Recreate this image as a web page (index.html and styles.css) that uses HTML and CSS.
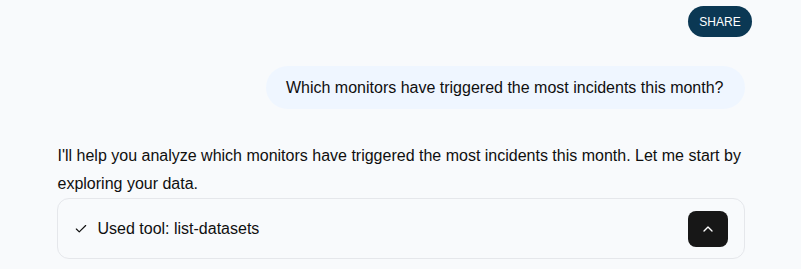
FILE: index.html
```html
<!DOCTYPE html>
<html lang="en">
<head>
<meta charset="utf-8">
<title>Chat</title>
<link rel="stylesheet" href="styles.css">
</head>
<body>
<header class="topbar">
  <button class="share">SHARE</button>
</header>
<main class="thread">
  <div class="user-msg">Which monitors have triggered the most incidents this month?</div>
  <p class="assistant-msg">I'll help you analyze which monitors have triggered the most incidents this month. Let me start by exploring your data.</p>
  <div class="tool-card">
    <div class="tool-label">
      <svg class="check" width="14" height="14" viewBox="0 0 24 24" fill="none" stroke="currentColor" stroke-width="2" stroke-linecap="round" stroke-linejoin="round"><path d="M20 6 9 17l-5-5"/></svg>
      <span>Used tool: list-datasets</span>
    </div>
    <button class="toggle" aria-label="Collapse">
      <svg width="16" height="16" viewBox="0 0 24 24" fill="none" stroke="#fff" stroke-width="2" stroke-linecap="round" stroke-linejoin="round"><path d="m18 15-6-6-6 6"/></svg>
    </button>
  </div>
</main>
</body>
</html>
```

FILE: styles.css
```css
* { box-sizing: border-box; }
html, body { margin: 0; padding: 0; }
body {
  background: #f8fafc;
  font-family: "Liberation Sans", Arial, sans-serif;
  color: #0f0f0f;
  font-size: 16px;
}
.topbar {
  display: flex;
  justify-content: flex-end;
  padding: 6px 49px 0 0;
}
.share {
  height: 31px;
  width: 64px;
  border: none;
  border-radius: 16px;
  background: #0b3854;
  color: #ffffff;
  font-family: "Liberation Sans", Arial, sans-serif;
  font-weight: normal;
  font-size: 12px;
  padding: 0;
}
.thread {
  width: 688px;
  margin: 0 auto;
  display: flex;
  flex-direction: column;
}
.user-msg {
  align-self: flex-end;
  margin-top: 29px;
  background: #eff6ff;
  border-radius: 22px;
  padding: 10px 21px 9px 20px;
  line-height: 24px;
}
.assistant-msg {
  margin: 33px 0 0 1px;
  line-height: 28px;
}
.tool-card {
  margin-top: 0;
  border: 1px solid #e5e7eb;
  border-radius: 12px;
  padding: 12px 16px 11px 16px;
  display: flex;
  align-items: center;
  justify-content: space-between;
}
.tool-label {
  display: flex;
  align-items: center;
  gap: 10px;
}
.check { color: #0f0f0f; }
.toggle {
  width: 40px;
  height: 36px;
  border: none;
  border-radius: 8px;
  background: #171717;
  display: flex;
  align-items: center;
  justify-content: center;
  padding: 0;
}
```
